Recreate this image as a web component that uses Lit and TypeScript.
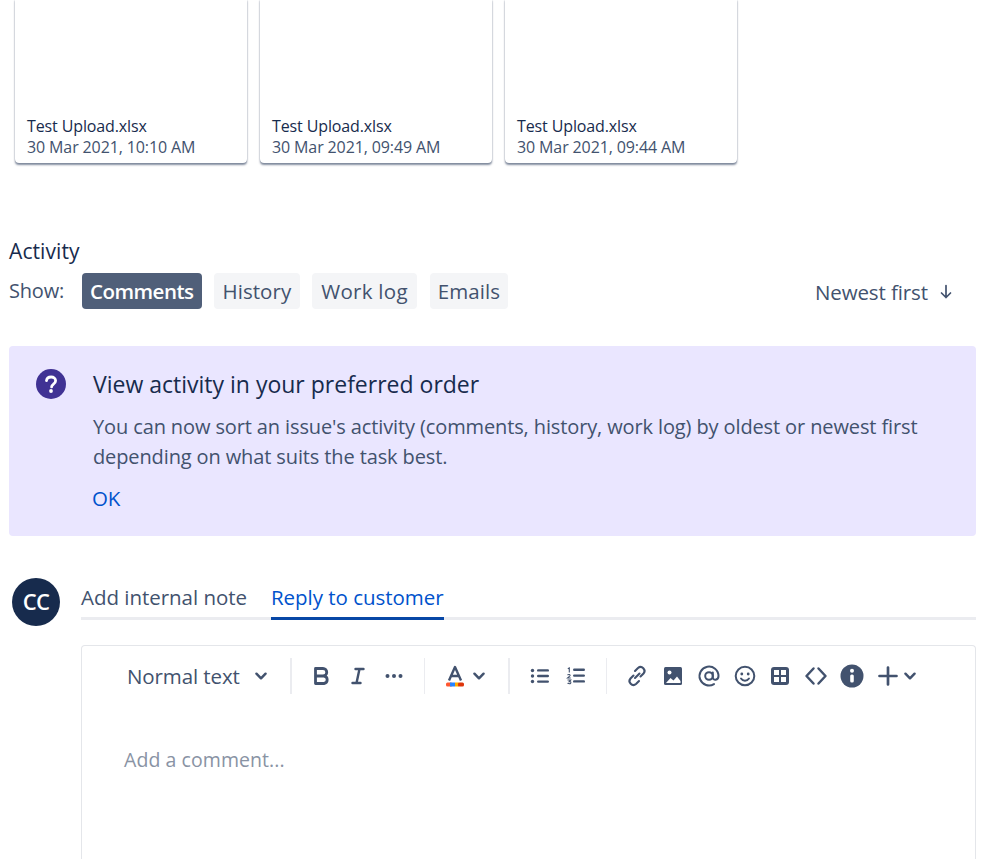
import { LitElement, html, css, svg } from "lit";
import { customElement } from "lit/decorators.js";

const ic = (body: unknown, cls = "ic") => html`<svg class=${cls} viewBox="0 0 24 24" fill="none">${body}</svg>`;
const chev = html`<svg class="chev" viewBox="0 0 14 14" fill="none"><path d="M3 5l4 4 4-4" stroke="#42526e" stroke-width="2.2" stroke-linecap="round" stroke-linejoin="round"/></svg>`;
const C = "#42526e";

@customElement("app-root")
export class AppRoot extends LitElement {
  static styles = css`
    :host { display: block; width: 999px; height: 859px; overflow: hidden; background: #fff; font-family: "Open Sans", "Noto Sans", sans-serif; color: #172b4d; -webkit-font-smoothing: antialiased; }
    .page { padding: 0 23px 0 9px; display: flex; flex-direction: column; }
    .cards { display: flex; gap: 13px; padding-left: 6px; }
    .card { width: 232px; height: 163px; box-sizing: border-box; background: #fff; border-radius: 0 0 4px 4px; box-shadow: 0 1.5px 2px rgba(9,30,66,.5), 0 0 1px rgba(9,30,66,.4); padding: 0 12px 5px; display: flex; flex-direction: column; justify-content: flex-end; }
    .fname { font-size: 16px; line-height: 21px; letter-spacing: -.12px; color: #172b4d; }
    .fdate { font-size: 16px; line-height: 21px; letter-spacing: -.12px; color: #42526e; }
    .title { font-size: 21px; line-height: 26px; margin-top: 75px; letter-spacing: .1px; color: #172b4d; }
    .show { display: flex; align-items: center; margin-top: 9px; height: 36px; }
    .show-lbl { font-size: 20px; width: 73px; color: #42526e; letter-spacing: -.2px; position: relative; top: -1px; }
    .pills { display: flex; gap: 12px; }
    .pill { height: 36px; box-sizing: border-box; padding: 0 9px; border-radius: 4px; background: #f4f5f7; color: #42526e; font-size: 20.5px; line-height: 37px; letter-spacing: .05px; }
    .pill.on { background: #505f79; color: #fff; font-weight: 600; letter-spacing: -.5px; padding: 0 8px; }
    .pill.wide { letter-spacing: .27px; }
    .pill.last { margin-left: 1px; padding: 0 8px; }
    .sort { margin-left: auto; margin-right: 21px; display: flex; align-items: center; gap: 9px; font-size: 20.5px; color: #42526e; letter-spacing: -.1px; position: relative; top: 1px; }
    .sort svg { width: 18px; height: 18px; }
    .note { margin-top: 37px; height: 190px; box-sizing: border-box; background: #eae6ff; border-radius: 4px; display: flex; padding: 23px 20px 0 26px; gap: 26px; }
    .note-ic { width: 32px; height: 32px; flex: none; margin-top: -1px; }
    .note h3 { margin: 0; font-size: 23px; line-height: 30px; font-weight: 500; color: #172b4d; }
    .note p { margin: 13px 0 0; font-size: 20px; line-height: 30px; letter-spacing: -.12px; color: #42526e; width: 860px; }
    .ok { margin-top: 11px; font-size: 20.5px; line-height: 30px; color: #0052cc; letter-spacing: -.3px; margin-left: -1px; }
    .reply { display: flex; margin-top: 42px; margin-left: 3px; gap: 21px; }
    .av { width: 48px; height: 48px; box-sizing: border-box; padding-bottom: 2px; border-radius: 50%; background: #172b4d; color: #fff; display: flex; align-items: center; justify-content: center; font-size: 22px; font-weight: 600; flex: none; letter-spacing: -.8px; }
    .main { flex: 1; min-width: 0; }
    .tabs { display: flex; gap: 24px; border-bottom: 3px solid #ebecf0; height: 42px; box-sizing: border-box; }
    .tab { font-size: 20.5px; line-height: 38px; color: #42526e; letter-spacing: -.03px; height: 42px; box-sizing: border-box; }
    .tab.on { color: #0052cc; border-bottom: 3px solid #0747a6; }
    .editor { margin-top: 25px; border: 1px solid #e4e6ea; border-bottom: none; border-radius: 4px 4px 0 0; height: 230px; box-sizing: border-box; }
    .bar { display: flex; align-items: center; height: 60px; padding-left: 45px; }
    .style { font-size: 20.5px; color: #42526e; letter-spacing: -.1px; display: flex; align-items: center; gap: 13px; width: 163px; }
    .chev { width: 16px; height: 16px; flex: none; }
    .sep { width: 2px; height: 36px; background: #ebecf0; flex: none; }
    .sep.thin { width: 1px; }
    .ic { width: 24px; height: 24px; flex: none; }
    .ed-ph { font-size: 19.5px; color: #8993a4; letter-spacing: .07px; margin: 39px 0 0 42px; line-height: 30px; }
    .g { display: flex; align-items: center; }
    .g1 { gap: 12px; padding: 0 18px 0 18px; }
    .g2 { gap: 4px; padding: 0 21px 0 18px; }
    .g3 { gap: 12px; padding: 0 18px 0 18px; }
    .g4 { gap: 11.860px; padding-left: 18px; }
    .g5 { gap: 2px; }
  `;

  render() {
    return html`<div class="page">
      <div class="cards">
        ${["10:10", "09:49", "09:44"].map(t => html`<div class="card"><div class="fname">Test Upload.xlsx</div><div class="fdate">30 Mar 2021, ${t} AM</div></div>`)}
      </div>
      <div class="title">Activity</div>
      <div class="show">
        <div class="show-lbl">Show:</div>
        <div class="pills">
          <div class="pill on">Comments</div><div class="pill">History</div><div class="pill wide">Work log</div><div class="pill last">Emails</div>
        </div>
        <div class="sort">Newest first
          <svg viewBox="0 0 18 18" fill="none"><path d="M9 2.5v12M4.5 10L9 14.5 13.5 10" stroke="${C}" stroke-width="1.7" stroke-linecap="round" stroke-linejoin="round"/></svg>
        </div>
      </div>
      <div class="note">
        <svg class="note-ic" viewBox="0 0 32 32"><circle cx="16" cy="16" r="15" fill="#403294"/><path d="M11.5 12.6c.3-2.2 2.2-3.6 4.6-3.6 2.6 0 4.5 1.5 4.5 3.8 0 1.8-1 2.7-2.3 3.5-1.2.8-1.7 1.3-1.7 2.6" fill="none" stroke="#fff" stroke-width="2.8" stroke-linecap="round"/><circle cx="16" cy="23" r="1.9" fill="#fff"/></svg>
        <div>
          <h3>View activity in your preferred order</h3>
          <p>You can now sort an issue's activity (comments, history, work log) by oldest or newest first depending on what suits the task best.</p>
          <div class="ok">OK</div>
        </div>
      </div>
      <div class="reply">
        <div class="av">CC</div>
        <div class="main">
          <div class="tabs"><div class="tab">Add internal note</div><div class="tab on">Reply to customer</div></div>
          <div class="editor">
            <div class="bar">
              <div class="style">Normal text ${chev}</div>
              <div class="sep"></div>
              <div class="g g1">
                ${ic(svg`<path d="M5.500 4.500H13a3.700 3.700 0 0 1 0 7.500H5.500zM5.500 12H14a3.800 3.800 0 0 1 0 7.500H5.500z" stroke="${C}" stroke-width="2.800" stroke-linejoin="round"/>`)}
                ${ic(svg`<path d="M9.500 5h8M6.500 19h8M13.500 5l-3 14" stroke="${C}" stroke-width="2.400" stroke-linecap="round"/>`)}
                ${ic(svg`<circle cx="5.500" cy="12" r="2" fill="${C}"/><circle cx="12" cy="12" r="2" fill="${C}"/><circle cx="18.500" cy="12" r="2" fill="${C}"/>`)}
              </div>
              <div class="sep thin"></div>
              <div class="g g2">
                <svg class="ic" viewBox="0 0 24 24" fill="none"><path d="M6 16.500L12 3l6 13.500M8 12h8" stroke="${C}" stroke-width="2.400" stroke-linejoin="round"/><rect x="3" y="18.500" width="6.500" height="4" rx="1.500" fill="#ff5630"/><rect x="7" y="18.500" width="5" height="4" fill="#2684ff"/><rect x="12" y="18.500" width="4" height="4" fill="#ffab00"/><rect x="15" y="18.500" width="6" height="4" rx="1.500" fill="#de350b"/></svg>
                ${chev}
              </div>
              <div class="sep"></div>
              <div class="g g3">
                ${ic(svg`<g fill="${C}"><circle cx="4.500" cy="6.500" r="1.700"/><circle cx="4.500" cy="12" r="1.700"/><circle cx="4.500" cy="17.500" r="1.700"/><rect x="9" y="5.200" width="12" height="2.400" rx="1.200"/><rect x="9" y="10.800" width="12" height="2.400" rx="1.200"/><rect x="9" y="16.400" width="12" height="2.400" rx="1.200"/></g>`)}
                ${ic(svg`<g fill="${C}"><rect x="9" y="4.600" width="12" height="2.400" rx="1.200"/><rect x="9" y="10.400" width="12" height="2.400" rx="1.200"/><rect x="9" y="16.200" width="12" height="2.400" rx="1.200"/></g><path d="M3.800 4.800l1.500-.8v4.500M3.500 11c1-1 3-.5 2.500.8L3.500 14h3.200M3.500 16h3.200l-1.500 1.600c1.500 0 2 .5 1.500 1.500-.5.700-2 .7-3.200.2" stroke="${C}" stroke-width="1.100"/>`)}
              </div>
              <div class="sep thin"></div>
              <div class="g g4">
                ${ic(svg`<path d="M10 14l4.500-4.500M8.500 11.500l-3 3a3.900 3.900 0 0 0 5.500 5.500l3-3M15.500 12.500l3-3A3.900 3.900 0 0 0 13 4l-3 3" stroke="${C}" stroke-width="2.100" stroke-linecap="round"/>`)}
                ${ic(svg`<rect x="3" y="3" width="18" height="18" rx="1.500" fill="${C}"/><circle cx="8.500" cy="8.500" r="2" fill="#fff"/><path d="M5 19l4.500-5 3 2.500 3.500-4 3.500 4.500V19z" fill="#fff"/>`)}
                ${ic(svg`<circle cx="12" cy="12" r="3.800" stroke="${C}" stroke-width="2"/><path d="M15.800 8.500v5c0 3.200 5.700 3 5.700-1.500A9.500 9.500 0 1 0 17 20.100" stroke="${C}" stroke-width="2" stroke-linecap="round"/>`)}
                ${ic(svg`<circle cx="12" cy="12" r="9.300" stroke="${C}" stroke-width="2"/><circle cx="8.800" cy="10" r="1.400" fill="${C}"/><circle cx="15.200" cy="10" r="1.400" fill="${C}"/><path d="M8 14.500c2 3 6 3 8 0" stroke="${C}" stroke-width="1.900" stroke-linecap="round"/>`)}
                ${ic(svg`<rect x="3" y="3" width="18" height="18" rx="3" fill="${C}"/><rect x="6" y="6" width="5" height="5" fill="#fff"/><rect x="13" y="6" width="5" height="5" fill="#fff"/><rect x="6" y="13" width="5" height="5" fill="#fff"/><rect x="13" y="13" width="5" height="5" fill="#fff"/>`)}
                ${ic(svg`<path d="M9.500 4.500L2.500 12l7 7.500M14.500 4.500l7 7.500-7 7.500" stroke="${C}" stroke-width="2.500" stroke-linecap="round" stroke-linejoin="round"/>`)}
                ${ic(svg`<circle cx="12" cy="12" r="11.500" fill="${C}"/><circle cx="12" cy="6.800" r="2" fill="#fff"/><rect x="10.200" y="10.500" width="3.600" height="8" rx="1.500" fill="#fff"/>`)}
                <div class="g g5">
                  ${ic(svg`<path d="M12 3.500v17M3.500 12h17" stroke="${C}" stroke-width="2.700" stroke-linecap="round"/>`)}
                  ${chev}
                </div>
              </div>
            </div>
            <div class="ed-ph">Add a comment...</div>
          </div>
        </div>
      </div>
    </div>`;
  }
}
